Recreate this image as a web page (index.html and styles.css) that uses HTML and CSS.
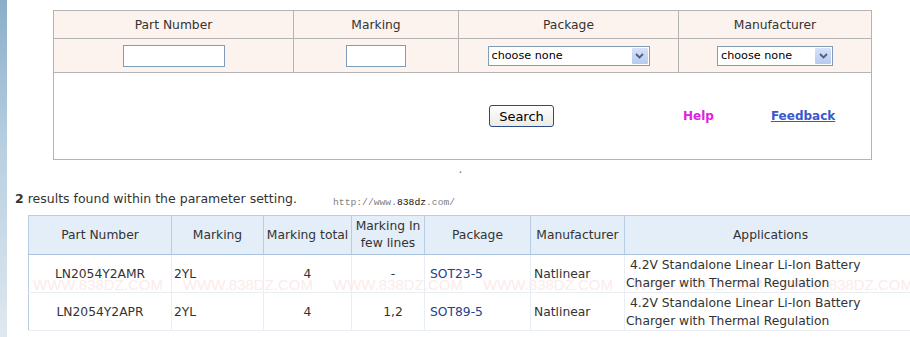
FILE: index.html
```html
<!DOCTYPE html>
<html lang="en">
<head>
    <meta charset="UTF-8">
    <title>Marking Search</title>
    <link rel="stylesheet" href="styles.css">
</head>
<body>
    <div class="page">
        <div class="side"></div>
        <div class="main">
            <table class="search">
                <colgroup>
                    <col class="w-part">
                    <col class="w-mark">
                    <col class="w-pkg">
                    <col class="w-mfr">
                </colgroup>
                <tr class="head">
                    <td>Part Number</td>
                    <td>Marking</td>
                    <td>Package</td>
                    <td>Manufacturer</td>
                </tr>
                <tr class="fields">
                    <td><input type="text" class="txt txt-part"></td>
                    <td><input type="text" class="txt txt-mark"></td>
                    <td>
                        <div class="sel sel-pkg">
                            <select><option>choose none</option></select>
                            <span class="arrow"><svg width="9" height="6" viewBox="0 0 9 6"><path d="M1 1 L4.5 4.5 L8 1" fill="none" stroke="#4a5f88" stroke-width="1.8"/></svg></span>
                        </div>
                    </td>
                    <td>
                        <div class="sel sel-mfr">
                            <select><option>choose none</option></select>
                            <span class="arrow"><svg width="9" height="6" viewBox="0 0 9 6"><path d="M1 1 L4.5 4.5 L8 1" fill="none" stroke="#4a5f88" stroke-width="1.8"/></svg></span>
                        </div>
                    </td>
                </tr>
                <tr class="actions">
                    <td colspan="4">
                        <div class="action-row">
                            <button type="button">Search</button>
                            <a href="#" class="help">Help</a>
                            <a href="#" class="feedback">Feedback</a>
                        </div>
                    </td>
                </tr>
            </table>

            <div class="dot">.</div>

            <div class="summary">
                <span class="summary-text"><b>2</b> results found within the parameter setting.</span>
                <span class="site">http://www.<b>838dz</b>.com/</span>
            </div>

            <div class="results-wrap">
                <div class="watermark">
                    <span>WWW.838DZ.COM</span>
                    <span>WWW.838DZ.COM</span>
                    <span>WWW.838DZ.COM</span>
                    <span>WWW.838DZ.COM</span>
                    <span>WWW.838DZ.COM</span>
                    <span>WWW.838DZ.COM</span>
                </div>
                <table class="results">
                    <colgroup>
                        <col class="r1">
                        <col class="r2">
                        <col class="r3">
                        <col class="r4">
                        <col class="r5">
                        <col class="r6">
                        <col class="r7">
                    </colgroup>
                    <tr>
                        <th>Part Number</th>
                        <th>Marking</th>
                        <th>Marking total</th>
                        <th>Marking In<br>few lines</th>
                        <th>Package</th>
                        <th>Manufacturer</th>
                        <th>Applications</th>
                    </tr>
                    <tr>
                        <td class="part">LN2054Y2AMR</td>
                        <td class="mark">2YL</td>
                        <td class="total">4</td>
                        <td class="lines">-</td>
                        <td class="pkg"><a href="#">SOT23-5</a></td>
                        <td class="mfr">Natlinear</td>
                        <td class="app">&nbsp;4.2V Standalone Linear Li-Ion Battery<br>Charger with Thermal Regulation</td>
                    </tr>
                    <tr>
                        <td class="part">LN2054Y2APR</td>
                        <td class="mark">2YL</td>
                        <td class="total">4</td>
                        <td class="lines">1,2</td>
                        <td class="pkg"><a href="#">SOT89-5</a></td>
                        <td class="mfr">Natlinear</td>
                        <td class="app">&nbsp;4.2V Standalone Linear Li-Ion Battery<br>Charger with Thermal Regulation</td>
                    </tr>
                </table>
            </div>
        </div>
    </div>
</body>
</html>
```

FILE: styles.css
```css
html, body {
    margin: 0;
    overflow: hidden;
}
body {
    font-family: "DejaVu Sans", Verdana, sans-serif;
    font-size: 12.3px;
    color: #333;
    background-color: #fff;
}
.page {
    display: flex;
    min-height: 337px;
}
.side {
    width: 7px;
    flex: none;
    background: linear-gradient(#8aaec8, #b9d0e2 45%, #dfe8ee);
}
.main {
    flex: 1;
    min-width: 0;
}

/* search form */
.search {
    border-collapse: collapse;
    table-layout: fixed;
    width: 818px;
    margin: 10px 0 0 46px;
}
.w-part { width: 240px; }
.w-mark { width: 165px; }
.w-pkg { width: 220px; }
.w-mfr { width: 193px; }
.search td {
    border: 1px solid #b3b3b3;
    text-align: center;
    padding: 0;
}
.search .head td {
    height: 27px;
    background-color: #fdf3ee;
}
.search .fields td {
    height: 33px;
    background-color: #fdf3ee;
}
.search .actions td {
    height: 86px;
    text-align: left;
}
.txt {
    box-sizing: border-box;
    height: 22px;
    border: 1px solid #7f9db9;
    background: #fff;
    vertical-align: middle;
    margin: 0;
}
.txt-part { width: 102px; }
.txt-mark { width: 60px; }
.sel {
    display: inline-flex;
    box-sizing: border-box;
    height: 20px;
    border: 1px solid #7f9db9;
    background: #fff;
    vertical-align: middle;
    padding: 1px;
}
.sel-pkg { width: 162px; }
.sel-mfr { width: 116px; }
.sel select {
    flex: 1;
    min-width: 0;
    appearance: none;
    border: none;
    outline: none;
    background: transparent;
    padding: 0 0 0 2px;
    font-family: "DejaVu Sans", Verdana, sans-serif;
    font-size: 11.2px;
    color: #000;
}
.arrow {
    width: 16px;
    flex: none;
    display: flex;
    align-items: center;
    justify-content: center;
    background: linear-gradient(#d5e1f8, #b7caef);
    border-radius: 1px;
}
.action-row {
    display: flex;
    align-items: center;
    padding-left: 435px;
}
.action-row button {
    width: 65px;
    height: 22px;
    padding: 0;
    border: 1px solid #2b4a86;
    border-radius: 3px;
    background: linear-gradient(#fefefe, #ecebe4);
    font-family: "DejaVu Sans", Verdana, sans-serif;
    font-size: 13px;
    color: #000;
}
.help {
    margin-left: 129px;
    font-weight: bold;
    font-size: 12px;
    color: #e020e0;
    text-decoration: none;
}
.feedback {
    margin-left: 57px;
    font-weight: bold;
    font-size: 12px;
    color: #3a58cc;
    text-decoration: underline;
}

.dot {
    text-align: center;
    color: #777;
    line-height: 16px;
    margin-top: 1px;
    padding-left: 4px;
}

.summary {
    display: flex;
    align-items: baseline;
    margin: 14px 0 0 8px;
    font-size: 12.5px;
    line-height: 16px;
}
.summary-text {
    width: 318px;
    flex: none;
}
.site {
    font-family: "Liberation Mono", monospace;
    font-size: 9.7px;
    color: #808080;
    position: relative;
    top: 2px;
}
.site b {
    color: #111;
    font-weight: normal;
}

/* results */
.results-wrap {
    position: relative;
    overflow: hidden;
    margin: 6px 0 0 21px;
}
.watermark {
    position: absolute;
    left: 5px;
    top: 61px;
    display: flex;
    font-family: "Liberation Sans", Arial, sans-serif;
    font-size: 15px;
    color: #fcebeb;
    white-space: nowrap;
}
.watermark span {
    width: 150px;
    flex: none;
}
.results {
    position: relative;
    border-collapse: collapse;
    table-layout: fixed;
    width: 888px;
    border: 1px solid #b8cde2;
}
.r1 { width: 143px; }
.r2 { width: 92px; }
.r3 { width: 88px; }
.r4 { width: 73px; }
.r5 { width: 106px; }
.r6 { width: 94px; }
.r7 { width: 292px; }
.results th {
    height: 38px;
    padding: 0 2px;
    font-weight: normal;
    line-height: 17px;
    background-color: #e4eef9;
    border-right: 1px solid #b8cde2;
    border-bottom: 1px solid #a8c2dc;
}
.results td {
    height: 37px;
    padding: 0;
    line-height: 18px;
    border-right: 1px solid #e8eef4;
    border-bottom: 1px solid #e8eef4;
}
.results .part { text-align: center; }
.results .mark { padding-left: 2px; }
.results .total { text-align: center; }
.results .lines { text-align: center; padding-left: 10px; }
.results .pkg { padding-left: 5px; }
.results .pkg a {
    color: #22428f;
    text-decoration: none;
}
.results .mfr { padding-left: 3px; }
.results .app { padding-left: 1px; }
```
